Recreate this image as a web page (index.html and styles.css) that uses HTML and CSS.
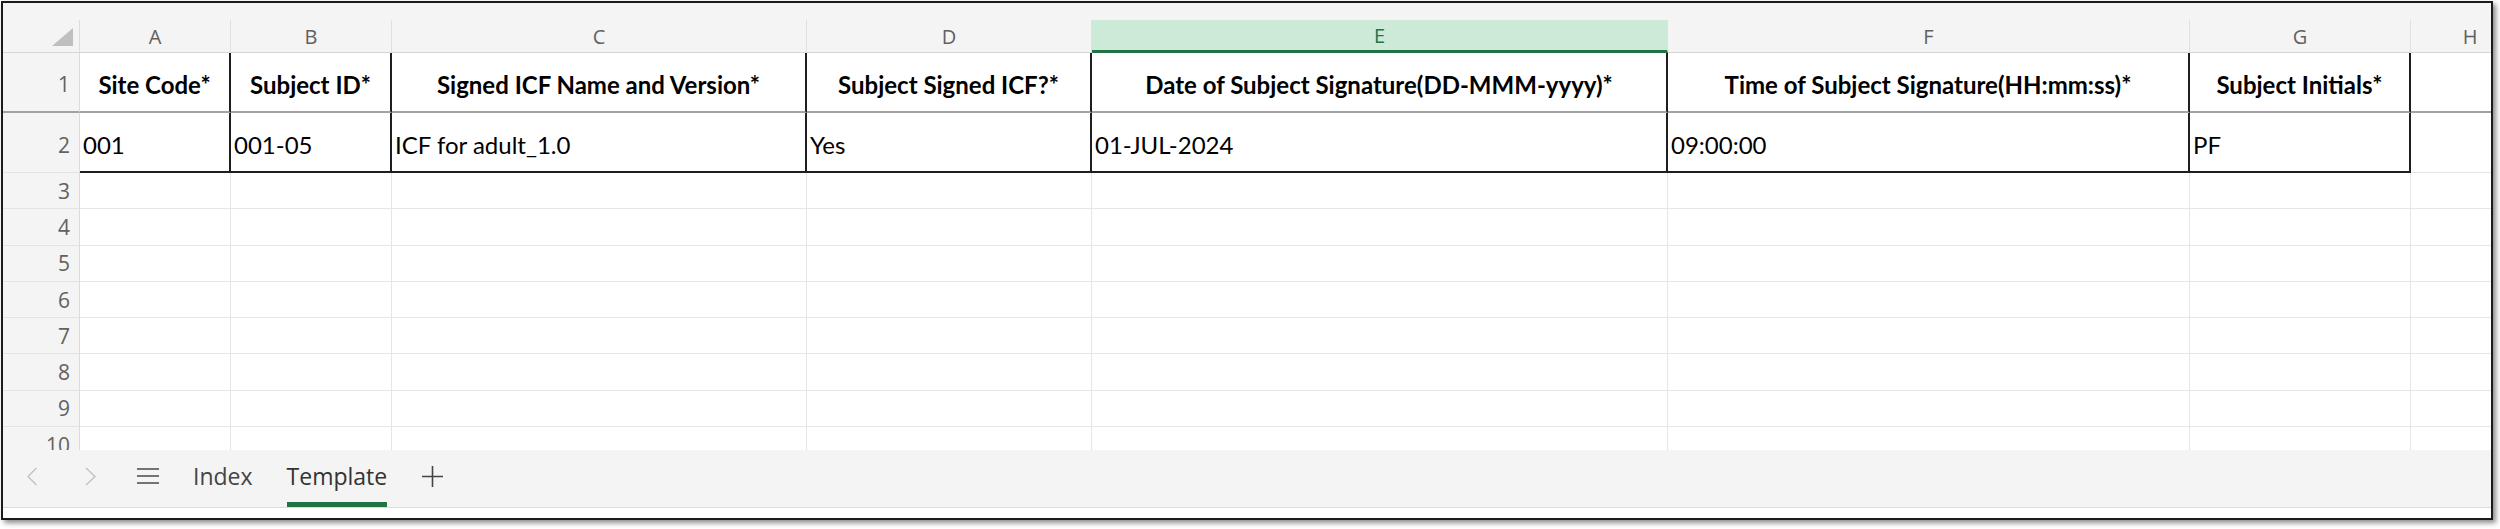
FILE: index.html
```html
<!DOCTYPE html>
<html>
<head>
<meta charset="utf-8">
<link rel="stylesheet" href="styles.css">
</head>
<body>
<div class="frame">
  <div class="strip"></div>
  <div class="sheet">
    <div class="corner"><svg width="21" height="18" viewBox="0 0 21 18"><polygon points="21,0 21,18 0,18" fill="#bfbfbf"/></svg></div>
    <div class="c ch">A</div>
    <div class="c ch">B</div>
    <div class="c ch">C</div>
    <div class="c ch">D</div>
    <div class="c ch sel">E</div>
    <div class="c ch">F</div>
    <div class="c ch">G</div>
    <div class="c ch h hh">H</div>

    <div class="c rh f tall">1</div>
    <div class="c hd bk f tall">Site Code*</div>
    <div class="c hd bk f tall">Subject ID*</div>
    <div class="c hd bk f tall">Signed ICF Name and Version*</div>
    <div class="c hd bk f tall">Subject Signed ICF?*</div>
    <div class="c hd bk f tall">Date of Subject Signature(DD-MMM-yyyy)*</div>
    <div class="c hd bk f tall">Time of Subject Signature(HH:mm:ss)*</div>
    <div class="c hd bk f tall">Subject Initials*</div>
    <div class="c h f"></div>

    <div class="c rh tall">2</div>
    <div class="c d bk bb tall">001</div>
    <div class="c d bk bb tall">001-05</div>
    <div class="c d bk bb tall">ICF for adult_1.0</div>
    <div class="c d bk bb tall">Yes</div>
    <div class="c d bk bb tall">01-JUL-2024</div>
    <div class="c d bk bb tall">09:00:00</div>
    <div class="c d bk bb tall">PF</div>
    <div class="c h"></div>

    <div class="c rh">3</div><div class="c"></div><div class="c"></div><div class="c"></div><div class="c"></div><div class="c"></div><div class="c"></div><div class="c"></div><div class="c h"></div>
    <div class="c rh">4</div><div class="c"></div><div class="c"></div><div class="c"></div><div class="c"></div><div class="c"></div><div class="c"></div><div class="c"></div><div class="c h"></div>
    <div class="c rh">5</div><div class="c"></div><div class="c"></div><div class="c"></div><div class="c"></div><div class="c"></div><div class="c"></div><div class="c"></div><div class="c h"></div>
    <div class="c rh">6</div><div class="c"></div><div class="c"></div><div class="c"></div><div class="c"></div><div class="c"></div><div class="c"></div><div class="c"></div><div class="c h"></div>
    <div class="c rh">7</div><div class="c"></div><div class="c"></div><div class="c"></div><div class="c"></div><div class="c"></div><div class="c"></div><div class="c"></div><div class="c h"></div>
    <div class="c rh">8</div><div class="c"></div><div class="c"></div><div class="c"></div><div class="c"></div><div class="c"></div><div class="c"></div><div class="c"></div><div class="c h"></div>
    <div class="c rh">9</div><div class="c"></div><div class="c"></div><div class="c"></div><div class="c"></div><div class="c"></div><div class="c"></div><div class="c"></div><div class="c h"></div>
    <div class="c rh">10</div><div class="c"></div><div class="c"></div><div class="c"></div><div class="c"></div><div class="c"></div><div class="c"></div><div class="c"></div><div class="c h"></div>
  </div>
  <div class="tabs">
    <div class="ti prev"><svg width="10" height="19" viewBox="0 0 10 19"><polyline points="9.5,1 1,9.5 9.5,18" fill="none" stroke="#c2c2c2" stroke-width="1.4"/></svg></div>
    <div class="ti next"><svg width="12" height="19" viewBox="0 0 12 19"><polyline points="1,1 10,9.5 1,18" fill="none" stroke="#c2c2c2" stroke-width="1.4"/></svg></div>
    <div class="ti menu"><svg width="22" height="16" viewBox="0 0 22 16"><path d="M0 1H22M0 8H22M0 15H22" stroke="#4a4a4a" stroke-width="1.6"/></svg></div>
    <div class="ti tab">Index</div>
    <div class="ti tab active">Template</div>
    <div class="ti plus"><svg width="21" height="21" viewBox="0 0 21 21"><path d="M10.5 0V21M0 10.5H21" stroke="#444" stroke-width="1.6"/></svg></div>
  </div>
  <div class="foot"></div>
</div>
</body>
</html>
```

FILE: styles.css
```css
* { box-sizing: border-box; margin: 0; padding: 0; }
html, body { background: #fff; }
body { width: 2500px; height: 529px; overflow: hidden; }

.frame {
  margin: 1px 0 0 1px;
  width: 2492px;
  height: 519px;
  border: 2px solid #1b1b1b;
  box-shadow: 3px 3px 5px rgba(0, 0, 0, 0.45);
  display: flex;
  flex-direction: column;
  background: #fff;
  overflow: hidden;
}

.strip { height: 17px; flex: none; background: #f4f4f4; }

.sheet {
  height: 430px;
  flex: none;
  display: grid;
  grid-template-columns: 77px 151px 161px 415px 285px 576px 522px 221px 1fr;
  grid-template-rows: 33px 60px 60px repeat(7, 36.3px) 36px;
  overflow: hidden;
}

.c {
  border-right: 1px solid #e6e6e6;
  border-bottom: 1px solid #e6e6e6;
  display: flex;
  align-items: center;
  font-family: Lato, "Liberation Sans", sans-serif;
  font-size: 24px;
  color: #000;
  white-space: nowrap;
  overflow: hidden;
}

.corner {
  background: #f4f4f4;
  border-right: 1px solid #dcdcdc;
  border-bottom: 1px solid #d6d6d6;
  display: flex;
  justify-content: flex-end;
  align-items: flex-end;
  padding: 0 6px 6px 0;
}

.ch {
  background: #f4f4f4;
  border-right-color: #e0e0e0;
  border-bottom-color: #d6d6d6;
  justify-content: center;
  font-family: "Open Sans", sans-serif;
  font-size: 20px;
  color: #616161;
}
.ch.sel {
  background: #cde9d8;
  border-bottom: 3px solid #217346;
  color: #217346;
}
.hh { padding-left: 38px; }

.rh {
  background: #f4f4f4;
  border-right-color: #dcdcdc;
  border-bottom-color: #e3e3e3;
  justify-content: flex-end;
  padding-right: 9px;
  font-family: "Open Sans", sans-serif;
  font-size: 21px;
  color: #616161;
}

.tall { padding-top: 4px; }
.hd { font-weight: 700; justify-content: center; }
.d { padding-left: 3px; }
.bk { border-right: 2px solid #1e1e1e; }
.f { border-bottom: 2px solid #a2a2a2; }
.bb { border-bottom: 2px solid #1e1e1e; }
.h { border-right: none; }

.tabs {
  height: 58px;
  flex: none;
  background: #f4f4f4;
  border-bottom: 1px solid #dcdcdc;
  display: flex;
  align-items: stretch;
  font-family: "Open Sans", sans-serif;
  font-size: 23px;
  color: #444;
}
.ti {
  display: flex;
  align-items: center;
  border-bottom: 5px solid transparent;
}
.prev { margin-left: 24px; }
.next { margin-left: 48px; }
.menu { margin-left: 40px; }
.tab { margin-left: 34px; }
.tab.active { border-bottom-color: #217346; color: #333; }
.plus { margin-left: 35px; }

.foot { flex: 1; background: #fff; }
```
